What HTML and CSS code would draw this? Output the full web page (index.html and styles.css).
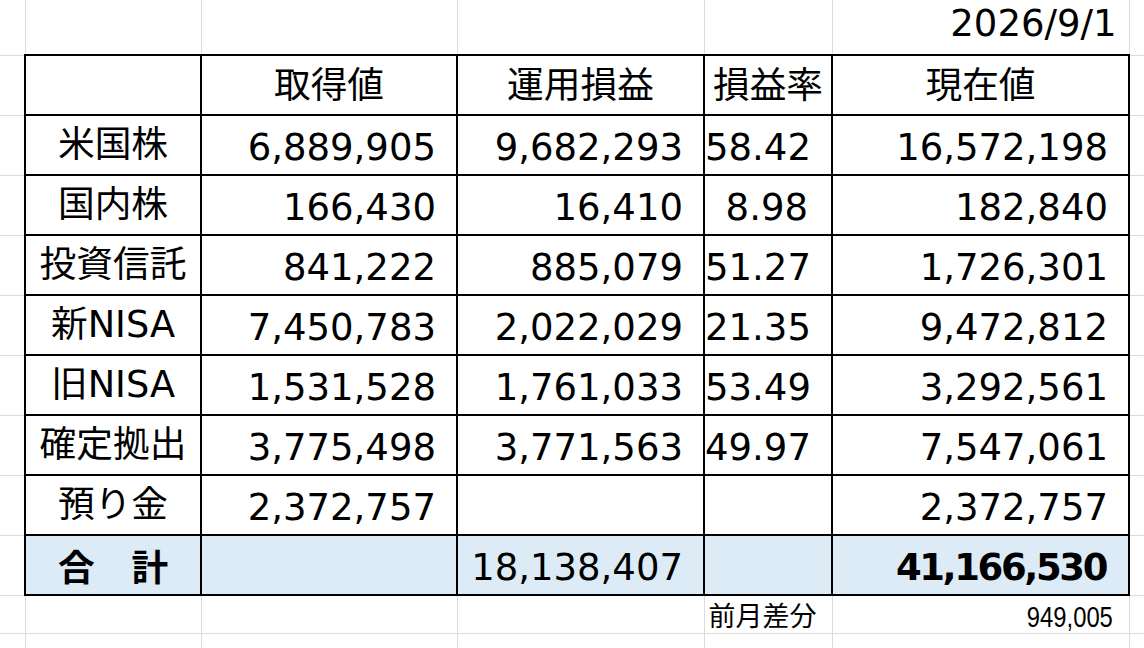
FILE: index.html
```html
<!DOCTYPE html>
<html lang="ja">
<head>
<meta charset="utf-8">
<title>資産一覧</title>
<link rel="stylesheet" href="styles.css">
</head>
<body>
<table class="sheet">
  <colgroup>
    <col class="c0"><col class="c1"><col class="c2"><col class="c3"><col class="c4"><col class="c5"><col class="c6">
  </colgroup>
  <tr class="r-top">
    <td class="edge-l"></td><td></td><td></td><td></td><td></td>
    <td class="date">2026/9/1</td><td class="edge-r"></td>
  </tr>
  <tr class="r">
    <td class="edge-l"></td>
    <td class="b"></td>
    <td class="b hd">取得値</td>
    <td class="b hd">運用損益</td>
    <td class="b hd">損益率</td>
    <td class="b hd">現在値</td>
    <td class="edge-r"></td>
  </tr>
  <tr class="r">
    <td class="edge-l"></td>
    <td class="b lb">米国株</td>
    <td class="b num">6,889,905</td>
    <td class="b num">9,682,293</td>
    <td class="b num rate">58.42</td>
    <td class="b num">16,572,198</td>
    <td class="edge-r"></td>
  </tr>
  <tr class="r">
    <td class="edge-l"></td>
    <td class="b lb">国内株</td>
    <td class="b num">166,430</td>
    <td class="b num">16,410</td>
    <td class="b num rate">8.98</td>
    <td class="b num">182,840</td>
    <td class="edge-r"></td>
  </tr>
  <tr class="r">
    <td class="edge-l"></td>
    <td class="b lb">投資信託</td>
    <td class="b num">841,222</td>
    <td class="b num">885,079</td>
    <td class="b num rate">51.27</td>
    <td class="b num">1,726,301</td>
    <td class="edge-r"></td>
  </tr>
  <tr class="r">
    <td class="edge-l"></td>
    <td class="b lb">新NISA</td>
    <td class="b num">7,450,783</td>
    <td class="b num">2,022,029</td>
    <td class="b num rate">21.35</td>
    <td class="b num">9,472,812</td>
    <td class="edge-r"></td>
  </tr>
  <tr class="r">
    <td class="edge-l"></td>
    <td class="b lb">旧NISA</td>
    <td class="b num">1,531,528</td>
    <td class="b num">1,761,033</td>
    <td class="b num rate">53.49</td>
    <td class="b num">3,292,561</td>
    <td class="edge-r"></td>
  </tr>
  <tr class="r">
    <td class="edge-l"></td>
    <td class="b lb">確定拠出</td>
    <td class="b num">3,775,498</td>
    <td class="b num">3,771,563</td>
    <td class="b num rate">49.97</td>
    <td class="b num">7,547,061</td>
    <td class="edge-r"></td>
  </tr>
  <tr class="r">
    <td class="edge-l"></td>
    <td class="b lb">預り金</td>
    <td class="b num">2,372,757</td>
    <td class="b num"></td>
    <td class="b num rate"></td>
    <td class="b num">2,372,757</td>
    <td class="edge-r"></td>
  </tr>
  <tr class="r total">
    <td class="edge-l"></td>
    <td class="b lb strong">合　計</td>
    <td class="b num"></td>
    <td class="b num">18,138,407</td>
    <td class="b num rate"></td>
    <td class="b num strong">41,166,530</td>
    <td class="edge-r"></td>
  </tr>
  <tr class="r-small">
    <td class="edge-l"></td><td></td><td></td>
    <td></td>
    <td class="note">前月差分</td>
    <td class="diff"><span>949,005</span></td>
    <td class="edge-r"></td>
  </tr>
  <tr class="r-last">
    <td class="edge-l"></td><td></td><td></td><td></td><td></td><td></td><td class="edge-r"></td>
  </tr>
</table>
</body>
</html>
```

FILE: styles.css
```css
html, body {
  margin: 0;
  padding: 0;
  background: #ffffff;
  overflow: hidden;
}

.sheet {
  border-collapse: collapse;
  table-layout: fixed;
  width: 1144px;
  font-family: "DejaVu Sans", "Noto Sans CJK JP", sans-serif;
  font-size: 37px;
  color: #000;
}

.c0 { width: 25px; }
.c1 { width: 176px; }
.c2 { width: 256px; }
.c3 { width: 247px; }
.c4 { width: 128px; }
.c5 { width: 297px; }
.c6 { width: 15px; }

.sheet td {
  border: 1px solid #dcdcdc;
  padding: 0;
  white-space: nowrap;
  overflow: hidden;
  vertical-align: middle;
  line-height: 1;
}

.r-top { height: 55px; }
.r-top td { border-top: none; }
.r { height: 60px; }
.r-small { height: 36px; }
.r-last { height: 17px; }
.r-last td { border-bottom: none; }

.sheet td.edge-l { border-left: none; }
.sheet td.edge-r { border-right: none; }

.sheet td.b { border: 2px solid #000; }

.hd, .lb {
  text-align: center;
  font-family: "Noto Sans CJK JP", sans-serif;
  font-size: 36.7px;
}

.hd { padding-bottom: 5px !important; }

.lb {
  font-family: "DejaVu Sans", "Noto Sans CJK JP", sans-serif;
}

.num {
  text-align: right;
  padding-right: 20px !important;
  padding-top: 4px !important;
}

.rate { padding-right: 23px !important; }

.total td.b { background: #ddebf7; }

.strong { font-weight: bold; }

.num.strong { letter-spacing: -2.4px; padding-right: 22px !important; }

.lb.strong {
  font-family: "Noto Sans CJK JP", sans-serif;
  text-align: left;
  padding-left: 32px !important;
}

.date {
  text-align: right;
  vertical-align: bottom !important;
  padding: 0 12px 12px 0 !important;
}

.note {
  font-family: "Noto Sans CJK JP", sans-serif;
  font-size: 27px;
  padding-left: 4px !important;
}

.diff {
  text-align: right;
  padding-right: 16px !important;
}

.diff span {
  display: inline-block;
  font-family: "Liberation Sans", sans-serif;
  font-size: 29px;
  transform: scaleX(0.82);
  transform-origin: right center;
}
```
